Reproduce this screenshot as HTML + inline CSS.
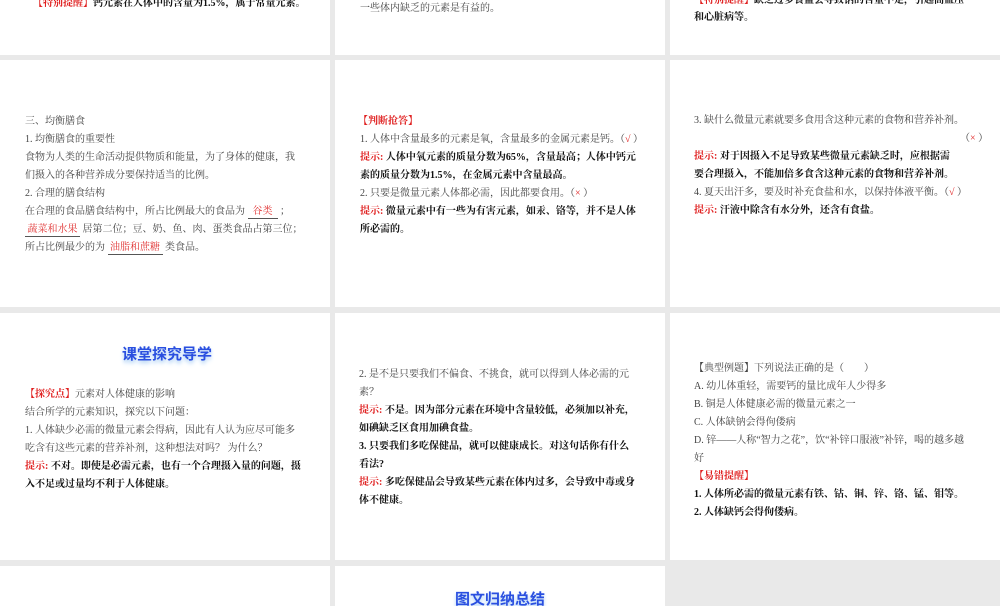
<!DOCTYPE html>
<html><head><meta charset="utf-8"><style>
body{margin:0;width:1000px;height:600px;background:#e9e9e9;position:relative;overflow:hidden;font-family:"Liberation Serif","Noto Serif CJK SC",serif;font-size:10px;color:#444}
.p{position:absolute;background:#fff;overflow:hidden}
.l{position:absolute;white-space:nowrap;line-height:12px}
.b{font-weight:bold;color:#111}
.r{color:#e02020}
.u{display:inline-block;border-bottom:1px solid #555;color:#e03030;text-align:center}
.t{position:absolute;font-family:"Liberation Sans","Noto Sans CJK SC",sans-serif;font-weight:bold;color:#2a4fe0;font-size:15px;text-shadow:0 2px 3px #bcd8f5,0 4px 5px #d8eafc}
</style></head><body>
<div class="p" style="left:0;top:0;width:330px;height:55px">
<div class="l b" style="left:33px;top:-2px"><span class="r">【特别提醒】</span>钙元素在人体中的含量为1.5%，属于常量元素。</div></div>
<div class="p" style="left:335px;top:0;width:330px;height:55px">
<div class="l" style="left:25px;top:3px">一些体内缺乏的元素是有益的。</div></div>
<div class="p" style="left:670px;top:0;width:330px;height:55px">
<div class="l b" style="left:24px;top:-5px"><span class="r">【特别提醒】</span>缺乏过多食盐会导致钠的含量不足，引起高血压</div>
<div class="l b" style="left:24px;top:12px">和心脏病等。</div></div>

<div class="p" style="left:0;top:60px;width:330px;height:247px">
<div class="l" style="left:25px;top:56px">三、均衡膳食</div>
<div class="l" style="left:25px;top:74px">1. 均衡膳食的重要性</div>
<div class="l" style="left:25px;top:92px">食物为人类的生命活动提供物质和能量，为了身体的健康，我</div>
<div class="l" style="left:25px;top:110px">们摄入的各种营养成分要保持适当的比例。</div>
<div class="l" style="left:25px;top:128px">2. 合理的膳食结构</div>
<div class="l" style="left:25px;top:146px">在合理的食品膳食结构中，所占比例最大的食品为 <span class="u" style="width:30px">谷类</span> ；</div>
<div class="l" style="left:25px;top:164px"><span class="u" style="width:55px">蔬菜和水果</span> 居第二位；豆、奶、鱼、肉、蛋类食品占第三位；</div>
<div class="l" style="left:25px;top:182px">所占比例最少的为 <span class="u" style="width:55px">油脂和蔗糖</span> 类食品。</div></div>

<div class="p" style="left:335px;top:60px;width:330px;height:247px">
<div class="l b r" style="left:23px;top:56px">【判断抢答】</div>
<div class="l" style="left:25px;top:74px">1. 人体中含量最多的元素是氧，含量最多的金属元素是钙。（<span class="r">√</span> ）</div>
<div class="l b" style="left:25px;top:92px"><span class="r">提示:</span> 人体中氧元素的质量分数为65%，含量最高；人体中钙元</div>
<div class="l b" style="left:25px;top:110px">素的质量分数为1.5%，在金属元素中含量最高。</div>
<div class="l" style="left:25px;top:128px">2. 只要是微量元素人体都必需，因此都要食用。（<span class="r">×</span> ）</div>
<div class="l b" style="left:25px;top:146px"><span class="r">提示:</span> 微量元素中有一些为有害元素，如汞、铬等，并不是人体</div>
<div class="l b" style="left:25px;top:164px">所必需的。</div></div>

<div class="p" style="left:670px;top:60px;width:330px;height:247px">
<div class="l" style="left:24px;top:55px">3. 缺什么微量元素就要多食用含这种元素的食物和营养补剂。</div>
<div class="l" style="left:290px;top:73px">（<span class="r">×</span> ）</div>
<div class="l b" style="left:24px;top:91px"><span class="r">提示:</span> 对于因摄入不足导致某些微量元素缺乏时，应根据需</div>
<div class="l b" style="left:24px;top:109px">要合理摄入，不能加倍多食含这种元素的食物和营养补剂。</div>
<div class="l" style="left:24px;top:127px">4. 夏天出汗多，要及时补充食盐和水，以保持体液平衡。（<span class="r">√</span> ）</div>
<div class="l b" style="left:24px;top:145px"><span class="r">提示:</span> 汗液中除含有水分外，还含有食盐。</div></div>

<div class="p" style="left:0;top:313px;width:330px;height:247px">
<div class="t" style="left:122px;top:30px">课堂探究导学</div>
<div class="l" style="left:25px;top:76px"><span class="b r">【探究点】</span>元素对人体健康的影响</div>
<div class="l" style="left:25px;top:94px">结合所学的元素知识，探究以下问题：</div>
<div class="l" style="left:25px;top:112px">1. 人体缺少必需的微量元素会得病，因此有人认为应尽可能多</div>
<div class="l" style="left:25px;top:130px">吃含有这些元素的营养补剂，这种想法对吗？ 为什么？</div>
<div class="l b" style="left:25px;top:148px"><span class="r">提示:</span> 不对。即使是必需元素，也有一个合理摄入量的问题，摄</div>
<div class="l b" style="left:25px;top:166px">入不足或过量均不利于人体健康。</div></div>

<div class="p" style="left:335px;top:313px;width:330px;height:247px">
<div class="l" style="left:24px;top:56px">2. 是不是只要我们不偏食、不挑食，就可以得到人体必需的元</div>
<div class="l" style="left:24px;top:74px">素？</div>
<div class="l b" style="left:24px;top:92px"><span class="r">提示:</span> 不是。因为部分元素在环境中含量较低，必须加以补充，</div>
<div class="l b" style="left:24px;top:110px">如碘缺乏区食用加碘食盐。</div>
<div class="l b" style="left:24px;top:128px">3. 只要我们多吃保健品，就可以健康成长。对这句话你有什么</div>
<div class="l b" style="left:24px;top:146px">看法?</div>
<div class="l b" style="left:24px;top:164px"><span class="r">提示:</span> 多吃保健品会导致某些元素在体内过多，会导致中毒或身</div>
<div class="l b" style="left:24px;top:182px">体不健康。</div></div>

<div class="p" style="left:670px;top:313px;width:330px;height:247px">
<div class="l" style="left:24px;top:50px">【典型例题】下列说法正确的是（　　）</div>
<div class="l" style="left:24px;top:68px">A. 幼儿体重轻，需要钙的量比成年人少得多</div>
<div class="l" style="left:24px;top:86px">B. 铜是人体健康必需的微量元素之一</div>
<div class="l" style="left:24px;top:104px">C. 人体缺钠会得佝偻病</div>
<div class="l" style="left:24px;top:122px">D. 锌——人称“智力之花”，饮“补锌口服液”补锌，喝的越多越</div>
<div class="l" style="left:24px;top:140px">好</div>
<div class="l b r" style="left:24px;top:158px">【易错提醒】</div>
<div class="l b" style="left:24px;top:176px">1. 人体所必需的微量元素有铁、钴、铜、锌、铬、锰、钼等。</div>
<div class="l b" style="left:24px;top:194px">2. 人体缺钙会得佝偻病。</div></div>

<div class="p" style="left:0;top:566px;width:330px;height:40px"></div>
<div class="p" style="left:335px;top:566px;width:330px;height:40px">
<div class="t" style="left:120px;top:22px">图文归纳总结</div></div>
</body></html>
